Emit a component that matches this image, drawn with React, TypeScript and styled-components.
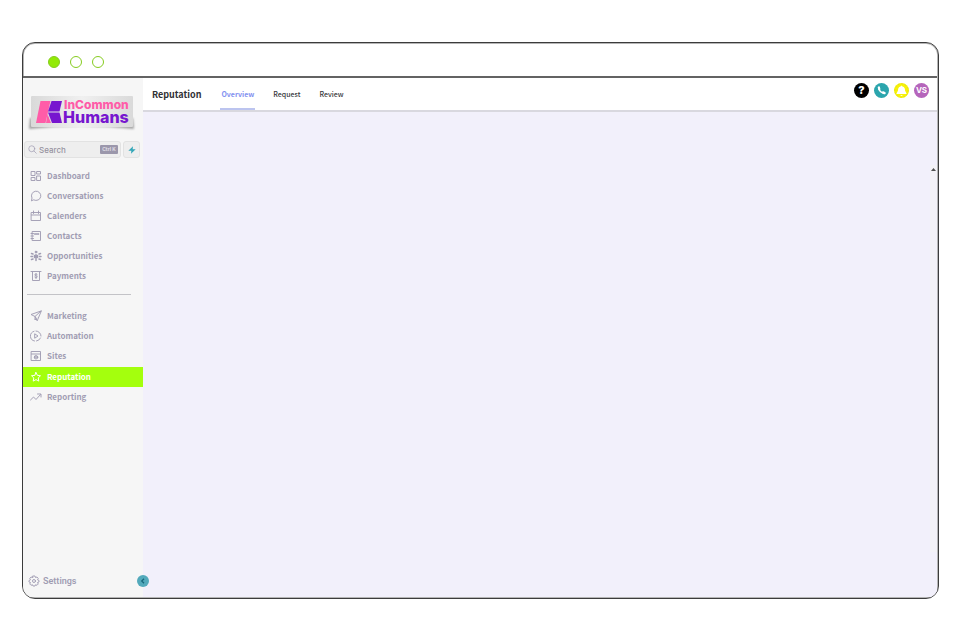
import React from "react";
import styled, { createGlobalStyle } from "styled-components";

const sans = `"Noto Sans CJK SC", "Noto Sans", sans-serif`;
const ink = "#a19db3";

const GlobalStyle = createGlobalStyle`
  * { box-sizing: border-box; }
  body { margin: 0; background: #fff; font-family: ${sans}; }
  button, input { font: inherit; padding: 0; border: 0; margin: 0; }
  button { cursor: pointer; }
  a { text-decoration: none; color: inherit; }
`;

const Page = styled.div`
  display: flex;
  min-height: 100vh;
  padding: 42px 21px 41px 22px;
`;

const Window = styled.div`
  flex: 1;
  display: flex;
  flex-direction: column;
  border: 1px solid #3c3c3c;
  border-radius: 13px;
  box-shadow: inset 0 0 0 1px #b5b5b5;
  overflow: hidden;
  padding: 0 1px 1px 0;
`;

const TitleBar = styled.div`
  display: flex;
  align-items: center;
  gap: 10px;
  height: 35px;
  padding: 4px 0 0 25px;
  border-bottom: 2px solid #636363;
`;

const WindowDot = styled.span<{ $filled?: boolean }>`
  width: 12px;
  height: 12px;
  border: 1px solid #86cc20;
  border-radius: 50%;
  background: ${(p) => (p.$filled ? "#92ea06" : "transparent")};
`;

const Body = styled.div`
  flex: 1;
  display: flex;
`;

const Sidebar = styled.aside`
  position: relative;
  display: flex;
  flex-direction: column;
  width: 120px;
  flex-shrink: 0;
  background: #f6f6f6;
  color: ${ink};
`;

const LogoLink = styled.a`
  display: block;
  height: 38px;
  margin: 16px 0 0 4px;
`;

const SearchRow = styled.div`
  display: flex;
  gap: 2px;
  margin: 9px 3px 0 1px;
`;

const SearchBox = styled.label`
  flex: 1;
  min-width: 0;
  display: flex;
  align-items: center;
  height: 17px;
  padding: 0 2px 0 3px;
  border: 1px solid #e2e2e2;
  border-radius: 3px;
  background: #eeeeee;
`;

const SearchInput = styled.input`
  flex: 1;
  min-width: 0;
  margin-left: 2px !important;
  background: none;
  outline: none;
  color: #8f8b9b;
  font: 500 8px/12px Inter, sans-serif !important;
  &::placeholder { color: #96929f; opacity: 1; }
`;

const Shortcut = styled.kbd`
  width: 18px;
  height: 9px;
  border-radius: 1px;
  background: #9b97ab;
  color: #e6e4ec;
  font: 600 5px/9px Inter, sans-serif;
  text-align: center;
  white-space: nowrap;
`;

const QuickButton = styled.button`
  display: grid;
  place-items: center;
  width: 17px;
  height: 17px;
  border: 1px solid #e2e2e2 !important;
  border-radius: 3px;
  background: #eeeeee;
`;

const NavArea = styled.div`
  margin-top: 8px;
`;

const NavGroup = styled.nav`
  display: flex;
  flex-direction: column;
`;

const NavItem = styled.a<{ $active?: boolean }>`
  display: flex;
  align-items: center;
  gap: 5px;
  height: 20px;
  margin-top: ${(p) => (p.$active ? "1px" : "0")};
  padding-left: 7px;
  background: ${(p) => (p.$active ? "#a4ff0d" : "transparent")};
  color: ${(p) => (p.$active ? "#fff" : "inherit")};
  font-size: 8px;
  font-weight: 700;
  line-height: 20px;
`;

const Divider = styled.hr`
  width: 104px;
  height: 1px;
  margin: 8px 0 11px 4px;
  border: 0;
  background: #c3c3c7;
`;

const SettingsLink = styled.a`
  display: flex;
  align-items: center;
  gap: 3px;
  margin: auto 0 7px 5px;
  height: 18px;
  font: 600 9px/18px Roboto, sans-serif;
`;

const CollapseButton = styled.button`
  position: absolute;
  right: -6px;
  bottom: 10px;
  display: grid;
  place-items: center;
  width: 12px;
  height: 12px;
  border-radius: 50%;
  background: #52a9bb;
`;

const Main = styled.main`
  flex: 1;
  min-width: 0;
  display: flex;
  flex-direction: column;
  background: #f2f0fb;
`;

const Header = styled.header`
  display: flex;
  align-items: center;
  height: 34px;
  padding: 0 8px 0 9px;
  background: #fff;
  border-bottom: 2px solid #d9d8df;
`;

const Title = styled.h1`
  margin: 0 19px 0 0;
  padding-top: 2px;
  color: #303034;
  font-size: 9px;
  font-weight: 700;
  line-height: 16px;
`;

const Tabs = styled.nav`
  display: flex;
  align-self: stretch;
  gap: 17px;
`;

const Tab = styled.a<{ $active?: boolean }>`
  display: flex;
  align-items: center;
  padding: 2px 1px 0;
  border-bottom: 2px solid ${(p) => (p.$active ? "#bcc4ef" : "transparent")};
  color: ${(p) => (p.$active ? "#8492f0" : "#38383c")};
  font-size: 7px;
  font-weight: ${(p) => (p.$active ? 700 : 500)};
`;

const Actions = styled.div`
  display: flex;
  gap: 5px;
  margin: 0 0 7px auto;
`;

const RoundButton = styled.button<{ $bg: string }>`
  display: grid;
  place-items: center;
  width: 15px;
  height: 15px;
  border-radius: 50%;
  background: ${(p) => p.$bg};
  color: #fff;
  font: 700 8px/15px Inter, sans-serif !important;
`;

const HelpMark = styled.span`
  font-size: 11px;
  font-weight: 800;
`;

const Content = styled.section`
  flex: 1;
  display: flex;
  justify-content: flex-end;
  padding: 53px 0 45px 0;
`;

const ScrollTrack = styled.div`
  display: flex;
  flex-direction: column;
  align-items: center;
  width: 7px;
  padding-top: 3px;
  background: #f3f2f7;
`;

const Icon = ({ children, size = 12 }: { children: React.ReactNode; size?: number }) => (
  <svg width={size} height={size} viewBox="0 0 24 24" fill="none" stroke="currentColor"
    strokeWidth="1.9" strokeLinecap="round" strokeLinejoin="round" aria-hidden="true">
    {children}
  </svg>
);

const icons: Record<string, React.ReactNode> = {
  Dashboard: <path d="M3 3h7v8H3zM14 3h7v5h-7zM3 15h7v6H3zM14 12h7v9h-7z" />,
  Conversations: <path d="M3 21l1-5a9.3 9.3 0 1 1 4 4z" />,
  Calenders: <path d="M3 5h18v16H3zM3 10h18M7 2v5M17 2v5" />,
  Contacts: (
    <>
      <path d="M5 3h16v18H5zM2 7h5M2 12h5M2 17h5" />
      <path d="M9 7h9v2H9z" strokeWidth="1" fill="currentColor" />
    </>
  ),
  Opportunities: (
    <>
      <path d="M12 9v12M9 11v4M15 11v4" strokeWidth="3" />
      <circle cx="12" cy="4" r="1.8" fill="currentColor" />
      <path d="M3 7l3 1M21 7l-3 1M2 13h3M22 13h-3M3 19l3-1M21 19l-3-1" strokeWidth="3" />
    </>
  ),
  Payments: (
    <>
      <path d="M2 3h20M5 3v18h14V3" />
      <path d="M14.5 9c-1-1.500-5-1.500-5 .8s5 1.400 5 3.700-4 2.500-5 1M12 7v10" />
    </>
  ),
  Marketing: <path d="M22 2L2 9l8 4 4 8zM22 2L10 13v7l3-4" />,
  Automation: (
    <>
      <path d="M9 22A10 10 0 0 1 8 2.600M12 2a10 10 0 0 1 10 10M21 16a10 10 0 0 1-8 6" />
      <path d="M10 8l6 4-6 4z" />
    </>
  ),
  Sites: (
    <>
      <path d="M3 3h18v18H3zM3 8h18" />
      <circle cx="12" cy="14.500" r="3.500" fill="currentColor" />
      <path d="M12 12v5" stroke="#f6f6f6" strokeWidth="1.200" />
    </>
  ),
  Reputation: <path d="M12 3l2.800 5.700 6.200.8-4.600 4.400 1.200 6.300L12 17.200l-5.600 3 1.200-6.300L3 9.500l6.200-.8z" />,
  Reporting: <path d="M1 18l6-6 5 5 9-10M15 6h7v6" />,
};

const Logo = () => (
  <svg width="112" height="38" viewBox="0 0 112 38" role="img" aria-label="InCommon Humans">
    <defs>
      <linearGradient id="plate" x1="0" y1="0" x2="1" y2="0">
        <stop offset="0" stopColor="#d9d9d9" />
        <stop offset="0.500" stopColor="#f0f0f0" />
        <stop offset="1" stopColor="#dadada" />
      </linearGradient>
      <filter id="soft" x="-10%" y="-50%" width="120%" height="200%">
        <feGaussianBlur stdDeviation="1" />
      </filter>
    </defs>
    <path d="M3 24L2 35Q54 29 107 35L106 24z" fill="#a2a2a2" filter="url(#soft)" />
    <rect x="4" y="2" width="102" height="31" rx="1" fill="url(#plate)" />
    <path d="M13.500 7H23.500L18.500 29H9z" fill="#ff5ca8" />
    <path d="M24.500 7H35L32.500 17.500H21z" fill="#7716cf" />
    <path d="M21 18.500H32.500L35 29H25z" fill="#7716cf" />
    <path d="M20.500 20L24 29H19z" fill="#ff5ca8" />
    <text x="37" y="15" fill="#ff5ca8" fontFamily="Inter, sans-serif" fontSize="12" fontWeight="800">InCommon</text>
    <text x="36" y="29" fill="#7716cf" fontFamily="Inter, sans-serif" fontSize="16" fontWeight="800">Humans</text>
  </svg>
);

const primary = ["Dashboard", "Conversations", "Calenders", "Contacts", "Opportunities", "Payments"];
const secondary = ["Marketing", "Automation", "Sites", "Reputation", "Reporting"];

const NavList = ({ items, label }: { items: string[]; label: string }) => (
  <NavGroup aria-label={label}>
    {items.map((name) => (
      <NavItem key={name} href="#" $active={name === "Reputation"}>
        <Icon>{icons[name]}</Icon>
        {name}
      </NavItem>
    ))}
  </NavGroup>
);

export default function App() {
  return (
    <>
      <GlobalStyle />
      <Page>
        <Window>
          <TitleBar>
            <WindowDot $filled />
            <WindowDot />
            <WindowDot />
          </TitleBar>
          <Body>
            <Sidebar>
              <LogoLink href="#"><Logo /></LogoLink>
              <SearchRow>
                <SearchBox>
                  <Icon size={9}><circle cx="10" cy="10" r="8" /><path d="M16 16l6 6" /></Icon>
                  <SearchInput type="text" placeholder="Search" aria-label="Search" />
                  <Shortcut>Ctrl K</Shortcut>
                </SearchBox>
                <QuickButton aria-label="Quick actions">
                  <svg width="8" height="8" viewBox="0 0 24 24" aria-hidden="true">
                    <path d="M15 1L1 14h9l-1 9 14-13h-9z" fill="#35a7b8" />
                  </svg>
                </QuickButton>
              </SearchRow>
              <NavArea>
                <NavList items={primary} label="Primary" />
                <Divider />
                <NavList items={secondary} label="Secondary" />
              </NavArea>
              <SettingsLink href="#">
                <Icon>
                  <circle cx="12" cy="12" r="3" />
                  <path d="M10 2h4l1 3 3-1 2.500 3-1.500 2.500 3 1.500v3l-3 1 1.500 3-2.500 2.500-3-1-1 2.500h-4l-1-2.500-3 1L3.500 18 5 15l-3-1v-3l3-1.500L3.500 7 6 4l3 1z" />
                </Icon>
                Settings
              </SettingsLink>
              <CollapseButton aria-label="Collapse sidebar">
                <svg width="6" height="6" viewBox="0 0 24 24" fill="none" stroke="#17667b" strokeWidth="5" aria-hidden="true">
                  <path d="M16 3l-9 9 9 9" />
                </svg>
              </CollapseButton>
            </Sidebar>
            <Main>
              <Header>
                <Title>Reputation</Title>
                <Tabs aria-label="Reputation views">
                  <Tab href="#" $active>Overview</Tab>
                  <Tab href="#">Request</Tab>
                  <Tab href="#">Review</Tab>
                </Tabs>
                <Actions>
                  <RoundButton $bg="#000" aria-label="Help"><HelpMark>?</HelpMark></RoundButton>
                  <RoundButton $bg="#2ba5ad" aria-label="Call">
                    <svg width="9" height="9" viewBox="0 0 24 24" fill="none" stroke="#fff" strokeWidth="4" strokeLinecap="round" aria-hidden="true">
                      <path d="M5 4C4 12 12 20 20 19" />
                      <path d="M5 4l1 4M20 19l-4-2" strokeWidth="6" />
                    </svg>
                  </RoundButton>
                  <RoundButton $bg="#f7f208" aria-label="Notifications">
                    <svg width="15" height="15" viewBox="0 0 30 30" fill="#fff" aria-hidden="true">
                      <circle cx="15" cy="15" r="13.500" fill="none" stroke="#c9c63a" strokeWidth="1" strokeDasharray="3 4" />
                      <path d="M15 5l2 2c4 1 5 4 5 8l3 6v1H5v-1l3-6c0-4 1-7 5-8zM12 24h6l-3 2z" />
                    </svg>
                  </RoundButton>
                  <RoundButton $bg="#b565bb" aria-label="Account VS">VS</RoundButton>
                </Actions>
              </Header>
              <Content>
                <ScrollTrack>
                  <svg width="5" height="3" viewBox="0 0 5 3" aria-hidden="true">
                    <path d="M0 3L2.500 0 5 3z" fill="#505050" />
                  </svg>
                </ScrollTrack>
              </Content>
            </Main>
          </Body>
        </Window>
      </Page>
    </>
  );
}
